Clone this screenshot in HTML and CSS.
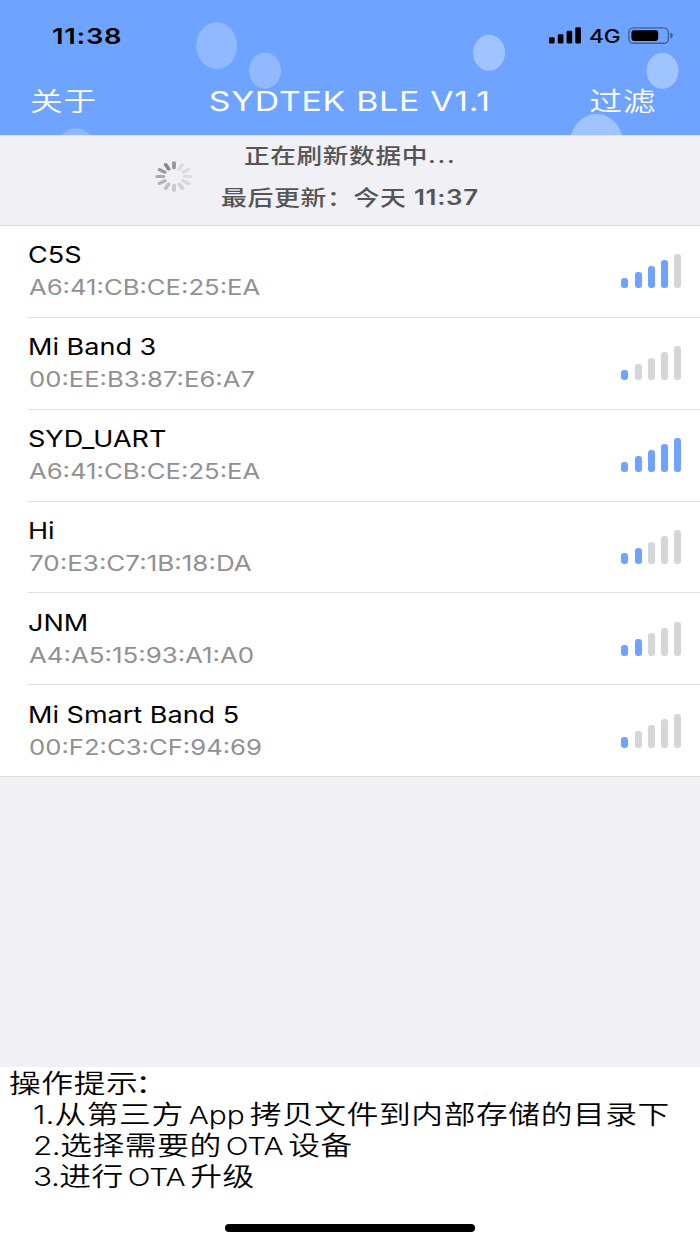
FILE: index.html
```html
<!DOCTYPE html>
<html lang="zh-CN">
<head>
<meta charset="utf-8">
<title>SYDTEK BLE</title>
<link rel="stylesheet" href="styles.css">
</head>
<body>
<div class="screen">
  <header class="header">
    <svg class="bubbles" width="700" height="135" viewBox="0 0 700 135" aria-hidden="true">
      <g fill="#91b9ff">
        <ellipse cx="216.7" cy="45.7" rx="20.5" ry="23.4"/>
        <ellipse cx="265" cy="70.7" rx="16" ry="18"/>
        <ellipse cx="76" cy="151.8" rx="20.5" ry="23.4"/>
      </g>
      <g fill="#a0c4ff">
        <ellipse cx="489" cy="52.8" rx="16" ry="18"/>
        <ellipse cx="662.5" cy="70.8" rx="16" ry="18"/>
        <ellipse cx="596.5" cy="144" rx="26.8" ry="30"/>
      </g>
    </svg>
    <div class="status">
      <span class="wide time">11:38</span>
      <div class="status-icons">
        <svg width="32" height="17" viewBox="0 0 32 17" aria-hidden="true">
          <rect x="0" y="10.3" width="5.6" height="6.2" rx="1.3"/>
          <rect x="8.8" y="7.3" width="5.6" height="9.2" rx="1.3"/>
          <rect x="17.6" y="3.7" width="5.6" height="12.8" rx="1.3"/>
          <rect x="26.3" y="0.2" width="5.6" height="16.3" rx="1.3"/>
        </svg>
        <span class="wide network">4G</span>
        <svg width="46" height="17" viewBox="0 0 46 17" aria-hidden="true">
          <rect x="0.8" y="0.9" width="39.6" height="15.4" rx="4.6" fill="none" stroke="#000" stroke-opacity=".42" stroke-width="1.4"/>
          <rect x="3.4" y="3.2" width="26.8" height="10.8" rx="2.4"/>
          <path d="M42.4 5.8q2.4.8 2.4 2.8t-2.4 2.8z" fill-opacity=".45"/>
        </svg>
      </div>
    </div>
    <nav class="nav">
      <a class="wide nav-link">关于</a>
      <h1 class="wide title">SYDTEK BLE V1.1</h1>
      <a class="wide nav-link nav-right">过滤</a>
    </nav>
  </header>

  <section class="refresh">
    <svg class="spinner" width="38" height="31" viewBox="-15.5 -15.5 31 31" preserveAspectRatio="none" aria-hidden="true">
      <g stroke="#8a8a8e" stroke-width="3.1" stroke-linecap="round">
        <path d="M0-8.7V-13.7" stroke-opacity=".88"/>
        <path d="M0-8.7V-13.7" transform="rotate(-30)" stroke-opacity="1"/>
        <path d="M0-8.7V-13.7" transform="rotate(-60)" stroke-opacity=".82"/>
        <path d="M0-8.7V-13.7" transform="rotate(-90)" stroke-opacity=".7"/>
        <path d="M0-8.7V-13.7" transform="rotate(-120)" stroke-opacity=".58"/>
        <path d="M0-8.7V-13.7" transform="rotate(-150)" stroke-opacity=".48"/>
        <path d="M0-8.7V-13.7" transform="rotate(180)" stroke-opacity=".38"/>
        <path d="M0-8.7V-13.7" transform="rotate(150)" stroke-opacity=".3"/>
        <path d="M0-8.7V-13.7" transform="rotate(120)" stroke-opacity=".25"/>
        <path d="M0-8.7V-13.7" transform="rotate(90)" stroke-opacity=".2"/>
        <path d="M0-8.7V-13.7" transform="rotate(60)" stroke-opacity=".2"/>
        <path d="M0-8.7V-13.7" transform="rotate(30)" stroke-opacity=".2"/>
      </g>
    </svg>
    <div class="refresh-text">
      <p class="wide">正在刷新数据中<span class="dots">...</span></p>
      <p class="wide">最后更新：今天 <b>11:37</b></p>
    </div>
  </section>

  <ul class="devices">
    <li class="device">
      <div class="device-row">
        <div><p class="wide name">C5S</p><p class="wide address">A6:41:CB:CE:25:EA</p></div>
        <div class="signal level-4"><i></i><i></i><i></i><i></i><i></i></div>
      </div>
    </li>
    <li class="device">
      <div class="device-row">
        <div><p class="wide name">Mi Band 3</p><p class="wide address">00:EE:B3:87:E6:A7</p></div>
        <div class="signal level-1"><i></i><i></i><i></i><i></i><i></i></div>
      </div>
    </li>
    <li class="device">
      <div class="device-row">
        <div><p class="wide name">SYD_UART</p><p class="wide address">A6:41:CB:CE:25:EA</p></div>
        <div class="signal level-5"><i></i><i></i><i></i><i></i><i></i></div>
      </div>
    </li>
    <li class="device">
      <div class="device-row">
        <div><p class="wide name">Hi</p><p class="wide address">70:E3:C7:1B:18:DA</p></div>
        <div class="signal level-2"><i></i><i></i><i></i><i></i><i></i></div>
      </div>
    </li>
    <li class="device">
      <div class="device-row">
        <div><p class="wide name">JNM</p><p class="wide address">A4:A5:15:93:A1:A0</p></div>
        <div class="signal level-2"><i></i><i></i><i></i><i></i><i></i></div>
      </div>
    </li>
    <li class="device">
      <div class="device-row">
        <div><p class="wide name">Mi Smart Band 5</p><p class="wide address">00:F2:C3:CF:94:69</p></div>
        <div class="signal level-1"><i></i><i></i><i></i><i></i><i></i></div>
      </div>
    </li>
  </ul>

  <footer class="tips">
    <p class="wide tip-title">操作提示<span class="colon">：</span></p>
    <p class="wide tip">1.<span class="han">从第三方</span><span class="latin">App</span><span class="han">拷贝文件到内部存储的目录下</span></p>
    <p class="wide tip tight">2.<span class="han">选择需要的</span><span class="latin">OTA</span><span class="han">设备</span></p>
    <p class="wide tip tight">3.<span class="han">进行</span><span class="latin">OTA</span><span class="han">升级</span></p>
    <div class="home-indicator"></div>
  </footer>
</div>
</body>
</html>
```
FILE: styles.css
```css
* {
  box-sizing: border-box;
}

body,
p,
h1,
ul {
  margin: 0;
  padding: 0;
}

body {
  font-family: Inter, "Noto Sans CJK SC", sans-serif;
  color: #000;
  background: #fff;
}

.screen {
  display: flex;
  flex-direction: column;
  width: 700px;
  height: 1244px;
  overflow: hidden;
  background: #f1f0f5;
}

/* Text is set on a horizontally expanded scale throughout. */
.wide {
  display: block;
  width: max-content;
  white-space: nowrap;
  transform: scaleX(1.22);
  transform-origin: left center;
}

/* Header */
.header {
  position: relative;
  flex: none;
  height: 135px;
  background: #6ea3ff;
}

.bubbles {
  position: absolute;
  inset: 0;
}

.status,
.nav {
  position: relative;
  display: flex;
  align-items: center;
}

.status {
  justify-content: space-between;
  height: 71px;
  padding: 0 26.3px 0 51.5px;
}

.time {
  font-size: 22px;
  font-weight: 600;
  letter-spacing: 0.6px;
  transform: scaleX(1.24);
}

.status-icons {
  display: flex;
  align-items: center;
}

.network {
  width: 39px;
  padding-left: 8px;
  font-size: 18.5px;
  font-weight: 450;
  transform-origin: 8px center;
  margin-right: 8px;
}

.status-icons svg {
  display: block;
}

.nav {
  display: grid;
  grid-template-columns: 1fr auto 1fr;
  height: 59px;
  padding: 0 43.5px 0 30px;
  color: #fff;
}

.nav-link {
  margin-top: -2px;
  font-size: 26px;
  font-weight: 350;
  letter-spacing: 0.6px;
  transform: scaleX(1.26);
}

.nav-right {
  justify-self: end;
  transform-origin: right center;
}

.title {
  margin: 1px 0 0 12.5px;
  font-size: 27px;
  font-weight: 400;
  letter-spacing: 0.6px;
  transform: scaleX(1.25);
  transform-origin: center;
}

/* Pull-to-refresh */
.refresh {
  display: grid;
  grid-template-columns: 193px 314px 193px;
  flex: none;
  height: 90px;
  border-top: 1px solid #dfe2ea;
  color: #555;
}

.spinner {
  justify-self: end;
  margin-top: 25px;
}

.refresh-text {
  display: flex;
  flex-direction: column;
  align-items: center;
  margin-top: -1px;
  font-size: 21px;
  font-weight: 500;
  line-height: 41px;
  letter-spacing: 0.55px;
}

.refresh-text .wide {
  transform-origin: center;
}

.refresh-text .wide:first-child {
  padding-left: 1px;
}

.refresh-text .wide:last-child {
  margin-top: 0.6px;
  transform: scaleX(1.23);
}

.refresh-text b {
  font-weight: 600;
}

.dots {
  letter-spacing: 1.4px;
}

/* Device list */
.devices {
  flex: none;
  list-style: none;
  background: #fff;
  border-top: 1px solid #d9d9dd;
  border-bottom: 1px solid #d9d9dd;
}

.device {
  padding-left: 28px;
}

.device-row {
  display: flex;
  justify-content: space-between;
  height: 91.85px;
  padding: 12.4px 18.8px 0 0;
  border-bottom: 1px solid #e1e1e3;
}

.device:last-child .device-row {
  height: 90.75px;
  border-bottom: 0;
}

.name {
  margin-left: 0.3px;
  font-size: 23px;
  line-height: 34px;
  transform: scaleX(1.175);
}

.address {
  margin-left: 0.6px;
  font-size: 21px;
  line-height: 32px;
  color: #919191;
  transform: scaleX(1.222);
}

.device:nth-child(4) .address {
  transform: scaleX(1.238);
}

.device:nth-child(5) .address {
  transform: scaleX(1.231);
}

.signal {
  display: flex;
  align-items: flex-end;
  gap: 6.2px;
  height: 34px;
  margin-top: 16px;
}

.signal i {
  width: 7px;
  height: 10.5px;
  border-radius: 3px;
  background: #d5d6da;
}

.signal i:nth-child(2) {
  height: 16.4px;
}

.signal i:nth-child(3) {
  height: 22.3px;
}

.signal i:nth-child(4) {
  height: 28.2px;
}

.signal i:nth-child(5) {
  height: 34px;
}

.level-1 i:nth-child(-n + 1),
.level-2 i:nth-child(-n + 2),
.level-4 i:nth-child(-n + 4),
.level-5 i {
  background: #6ea3ff;
}

/* Tips */
.tips {
  flex: none;
  height: 177px;
  margin-top: auto;
  padding: 1px 0 0;
  background: #fff;
  font-size: 26px;
  font-weight: 350;
  line-height: 31px;
}

.tips .wide {
  height: 31px;
}

.tip-title {
  margin-left: 8.5px;
  letter-spacing: 0.5px;
}

.colon {
  margin-left: -2.5px;
}

.tip {
  margin-left: 33px;
}

.tight {
  margin-left: 32.5px;
  letter-spacing: -0.5px;
}

.han {
  letter-spacing: 0.5px;
}

.latin {
  margin: 0 4px;
  font-size: 24.5px;
  line-height: 1;
}

.tight .latin {
  margin: 0 4px 0 3.2px;
  letter-spacing: -0.2px;
}

.home-indicator {
  width: 250px;
  height: 8px;
  margin: 31.5px auto 0;
  border-radius: 4px;
  background: #000;
}
```
